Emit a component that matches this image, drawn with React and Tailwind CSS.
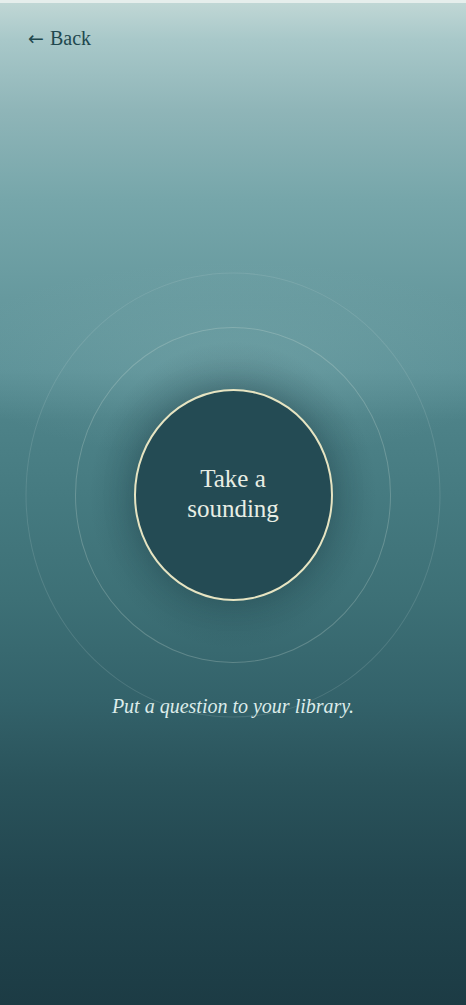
export default function App() {
  return (
    <div
      className="relative w-full min-h-[1005px] overflow-hidden flex flex-col"
      style={{ fontFamily: '"Liberation Serif", "DejaVu Serif", serif' }}
    >
      <div className="absolute inset-0 bg-[linear-gradient(180deg,#c2d8d6_0px,#a8c8c9_40px,#8fb5b8_110px,#76a6aa_200px,#66999e_300px,#5d9298_370px,#4d8288_420px,#457a80_500px,#3d7076_600px,#33626a_700px,#2a535b_780px,#22464f_880px,#1c3b44_1005px)]" />
      <div className="absolute left-[-60px] right-[-60px] top-[260px] h-[200px] bg-[radial-gradient(ellipse_at_center,rgba(150,190,192,0.2),rgba(150,190,192,0)_70%)]" />
      <div className="relative h-[3px] bg-[#e6eeec]" />
      <div className="relative h-[270px] px-[28px] pt-[23px]">
        <button className="flex items-center gap-[6px] text-[20px] leading-[24px] text-[#1f484e]">
          <span className="text-[19px]" style={{ fontFamily: '"DejaVu Sans", sans-serif' }}>←</span>
          <span>Back</span>
        </button>
      </div>
      <div className="relative h-[444px] flex items-center justify-center">
        <div className="absolute left-1/2 top-1/2 -translate-x-1/2 -translate-y-1/2 w-[415px] h-[445px] rounded-[50%] border border-[rgba(200,220,215,0.16)]" />
        <div className="absolute left-1/2 top-1/2 -translate-x-1/2 -translate-y-1/2 w-[316px] h-[336px] rounded-[50%] border border-[rgba(210,225,215,0.26)]" />
        <div className="absolute left-1/2 top-1/2 -translate-x-1/2 -translate-y-1/2 w-[290px] h-[310px] rounded-[50%] bg-[radial-gradient(ellipse_at_center,rgba(28,60,68,0.3)_35%,rgba(28,60,68,0)_70%)]" />
        <button className="relative w-[199px] h-[212px] rounded-[50%] bg-[#244b54] border-2 border-[#e6e4c2] flex items-center justify-center shadow-[0_0_30px_rgba(20,48,56,0.3)]">
          <span className="text-[25px] leading-[30px] text-[#e8eee4] -mt-[2px]">
            Take a<br />sounding
          </span>
        </button>
      </div>
      <p className="relative -mt-[23px] text-center italic text-[20px] leading-[24px] text-[#dcecea]">
        Put a question to your library.
      </p>
    </div>
  );
}
